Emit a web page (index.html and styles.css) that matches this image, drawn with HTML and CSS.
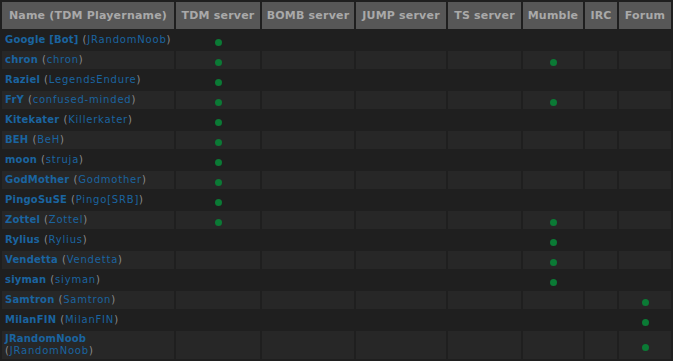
FILE: index.html
```html
<!DOCTYPE html>
<html lang="en">
<head>
    <meta charset="UTF-8">
    <title>Online players</title>
    <link rel="stylesheet" href="styles.css">
</head>
<body>
    <table class="players">
        <thead>
            <tr>
                <th class="col-name">Name (TDM Playername)</th>
                <th class="col-tdm">TDM server</th>
                <th class="col-bomb">BOMB server</th>
                <th class="col-jump">JUMP server</th>
                <th class="col-ts">TS server</th>
                <th class="col-mumble">Mumble</th>
                <th class="col-irc">IRC</th>
                <th class="col-forum">Forum</th>
            </tr>
        </thead>
        <tbody id="player-rows"></tbody>
    </table>

    <script>
        // name, tdm name, then the columns where the player is online
        let players = [
            { name: "Google [Bot]", tdm: "JRandomNoob", on: [1] },
            { name: "chron", tdm: "chron", on: [1, 5] },
            { name: "Raziel", tdm: "LegendsEndure", on: [1] },
            { name: "FrY", tdm: "confused-minded", on: [1, 5] },
            { name: "Kitekater", tdm: "Killerkater", on: [1] },
            { name: "BEH", tdm: "BeH", on: [1] },
            { name: "moon", tdm: "struja", on: [1] },
            { name: "GodMother", tdm: "Godmother", on: [1] },
            { name: "PingoSuSE", tdm: "Pingo[SRB]", on: [1] },
            { name: "Zottel", tdm: "Zottel", on: [1, 5] },
            { name: "Rylius", tdm: "Rylius", on: [5] },
            { name: "Vendetta", tdm: "Vendetta", on: [5] },
            { name: "siyman", tdm: "siyman", on: [5] },
            { name: "Samtron", tdm: "Samtron", on: [7] },
            { name: "MilanFIN", tdm: "MilanFIN", on: [7] },
            { name: "JRandomNoob", tdm: "JRandomNoob", on: [7], wrap: true }
        ];

        const tbody = document.getElementById("player-rows");

        players.forEach((p, i) => {
            let tr = document.createElement("tr");
            if (i % 2 === 1) tr.classList.add("alt");

            let nameCell = document.createElement("td");
            nameCell.classList.add("name");
            nameCell.innerHTML = `<a href="#" class="member">${p.name}</a>` +
                (p.wrap ? '<br>' : ' ') +
                `(<a href="#" class="tdm">${p.tdm}</a>)`;
            tr.appendChild(nameCell);

            for (let c = 1; c < 8; c++) {
                let td = document.createElement("td");
                if (p.on.includes(c)) {
                    let dot = document.createElement("span");
                    dot.classList.add("dot");
                    td.appendChild(dot);
                }
                tr.appendChild(td);
            }
            tbody.appendChild(tr);
        });
    </script>
</body>
</html>
```

FILE: styles.css
```css
html, body {
    margin: 0;
    padding: 0;
    background-color: #1f1f1f;
    font-family: "DejaVu Sans", Verdana, sans-serif;
}

.players {
    border-collapse: separate;
    border-spacing: 2px;
    table-layout: fixed;
    width: 673px;
}

.players th {
    box-sizing: border-box;
    height: 27px;
    padding: 0;
    background-color: #575757;
    color: #a9a9a9;
    font-size: 11px;
    font-weight: bold;
    letter-spacing: 0.2px;
    text-align: center;
    vertical-align: middle;
    white-space: nowrap;
}

.col-name { width: 172px; }
.col-tdm { width: 84px; }
.col-bomb { width: 92px; }
.col-jump { width: 90px; }
.col-ts { width: 73px; }
.col-mumble { width: 60px; }
.col-irc { width: 32px; }
.col-forum { width: 52px; }

.players td {
    box-sizing: border-box;
    height: 18px;
    padding: 2px 3px;
    font-size: 10px;
    line-height: 12px;
    letter-spacing: 0.8px;
    color: #8c8c8c;
    white-space: nowrap;
    overflow: hidden;
    vertical-align: middle;
}

.players tr.alt td {
    background-color: #272727;
}

.players a {
    color: #1a64a0;
    text-decoration: none;
}

.players a.member {
    font-weight: bold;
    letter-spacing: 0.2px;
}

.dot {
    display: block;
    width: 7px;
    height: 7px;
    margin: 4px auto 0;
    border-radius: 50%;
    background-color: #0b7a35;
}
```
